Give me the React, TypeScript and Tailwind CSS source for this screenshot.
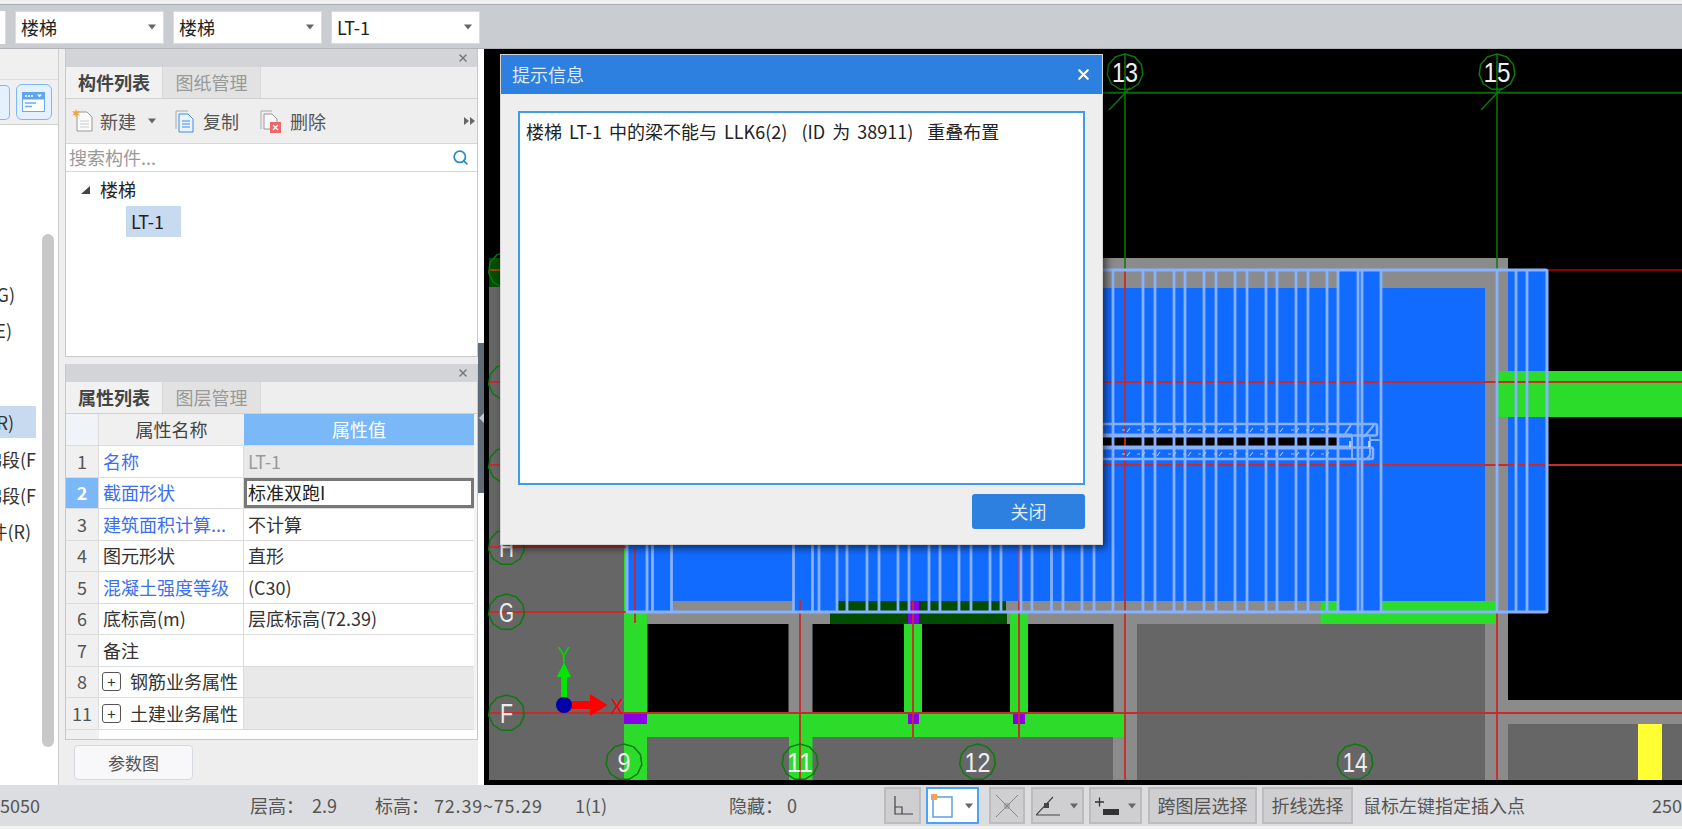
import React from "react";
import { Search, X } from "lucide-react";

const Caret = ({ className = "" }: { className?: string }) => (
  <svg width="10" height="6" viewBox="0 0 10 6" className={className}><path d="M1 0.5h8L5 5.5z" fill="#666" /></svg>
);

const Combo = ({ text, w = 149 }: { text: string; w?: number }) => (
  <div style={{ width: w }} className="h-[33px] shrink-0 bg-white border border-[#dcdcdc] flex items-center justify-between pl-[5px] pr-[6px] text-[18px] text-[#222]">
    <span>{text}</span>
    <Caret />
  </div>
);

const Tabs = ({ a, b }: { a: string; b: string }) => (
  <>
    <div className="h-[18px] bg-[#d2d4d8] flex items-center justify-end pr-[8px] shrink-0">
      <X size={12} strokeWidth={3} className="text-[#777]" />
    </div>
    <div className="h-[32px] flex bg-[#eeeeee] border-b border-[#d0d0d0] shrink-0">
      <div className="w-[97px] flex items-center justify-center font-bold text-[18px] text-[#444] bg-[#f1f1f1] border-r border-[#d8d8d8]">{a}</div>
      <div className="w-[98px] flex items-center justify-center text-[18px] text-[#999] bg-[#e2e2e2] border-r border-[#d8d8d8]">{b}</div>
    </div>
  </>
);

type Row = { n: string; name: string; val: string; blue?: boolean; plus?: boolean; grayVal?: boolean; sel?: boolean };
const rows: Row[] = [
  { n: "1", name: "名称", val: "LT-1", blue: true, grayVal: true },
  { n: "2", name: "截面形状", val: "标准双跑I", blue: true, sel: true },
  { n: "3", name: "建筑面积计算...", val: "不计算", blue: true },
  { n: "4", name: "图元形状", val: "直形" },
  { n: "5", name: "混凝土强度等级", val: "(C30)", blue: true },
  { n: "6", name: "底标高(m)", val: "层底标高(72.39)" },
  { n: "7", name: "备注", val: "" },
  { n: "8", name: "钢筋业务属性", val: "", plus: true, grayVal: true },
  { n: "11", name: "土建业务属性", val: "", plus: true, grayVal: true },
];

const PropRow = ({ r }: { r: Row }) => (
  <div className="flex h-[31.5px] border-b border-[#dcdcdc] text-[18px]">
    <div className={`w-[33px] shrink-0 flex items-center justify-center border-r border-[#dcdcdc] ${r.sel ? "bg-[#7ab8f8] text-white font-bold" : "bg-[#f0f0f0] text-[#555]"}`}>{r.n}</div>
    <div className={`w-[145px] shrink-0 flex items-center pl-[4px] whitespace-nowrap overflow-hidden border-r border-[#dcdcdc] bg-white ${r.blue ? "text-[#3b6ff0]" : "text-[#333]"}`}>
      {r.plus && (
        <span className="w-[19px] h-[19px] mr-[9px] ml-[-1px] border border-[#555] rounded-[3px] flex items-center justify-center text-[15px] leading-none text-[#333] shrink-0">+</span>
      )}
      {r.name}
    </div>
    <div className={`flex-1 flex items-center ${r.sel ? "border-[3px] border-[#777] bg-white text-[#222] pl-[1px]" : r.grayVal ? "bg-[#e9e9e9] text-[#999] pl-[4px]" : "bg-white text-[#333] pl-[4px]"}`}>{r.val}</div>
  </div>
);

const SideItem = ({ text, hi, w = 36, tw, mt = 0 }: { text: string; hi?: boolean; w?: number; tw?: number; mt?: number }) => (
  <div style={{ width: w, marginTop: mt }} className={`h-[32px] flex items-center ${hi ? "bg-[#c8daf0]" : ""}`}>
    <div style={{ width: tw ?? w }} className="flex justify-end overflow-hidden whitespace-nowrap text-[18px] text-[#333]">{text}</div>
  </div>
);

const Sidebar = () => (
  <div className="w-[59px] shrink-0 relative bg-white border-r border-[#cfcfcf] flex flex-col">
    <div className="h-[31px] bg-[#f0f0f0] border-b border-[#dedede]" />
    <div className="h-[45px] bg-[#f0f0f0] border-b border-[#cfcfcf] flex items-center gap-[6px] pr-[6px] justify-end">
      <div className="w-[10px] h-[35px] rounded-r-[5px] border border-l-0 border-[#7ab8f8] bg-[#e6f1ff]" />
      <div className="w-[37px] h-[36px] rounded-[6px] border border-[#7ab8f8] bg-[#e6f1ff] flex items-center justify-center">
        <svg width="23" height="20" viewBox="0 0 23 20">
          <rect x="0.5" y="0.5" width="22" height="19" fill="#fff" stroke="#6aa9ee" />
          <rect x="0.5" y="0.5" width="22" height="7" fill="#5ea4ee" />
          <path d="M4 3v2M7 3v2M10 3v2" stroke="#fff" strokeWidth="1.6" />
          <path d="M15 2.5h5l-2.5 3z" fill="#fff" />
          <path d="M3 11h11M3 14.5h7" stroke="#6aa9ee" strokeWidth="1.5" />
        </svg>
      </div>
    </div>
    <div className="flex flex-col">
      <div className="h-[153px]" />
      <SideItem text="(G)" w={15} />
      <SideItem text="(E)" w={12} mt={4} />
      <SideItem text="(R)" hi tw={14} mt={60} />
      <SideItem text="梯段(F" mt={5} />
      <SideItem text="梯段(F" mt={4} />
      <SideItem text="件(R)" w={31} mt={4} />
    </div>
    <div className="absolute left-[42px] top-[185px] w-[12px] h-[513px] rounded-full bg-[#c8c8c8]" />
  </div>
);

const Panels = () => (
  <div className="w-[413px] shrink-0 flex flex-col bg-[#eeeeee] text-[#333]">
    <div className="h-[308px] flex flex-col border border-t-0 border-[#c8c8c8] bg-white shrink-0">
      <Tabs a="构件列表" b="图纸管理" />
      <div className="h-[45px] bg-[#eeeeee] border-b border-[#d6d6d6] flex items-center pl-[6px] text-[18px] text-[#555] shrink-0">
        <svg width="22" height="24" viewBox="0 0 22 24" className="mr-[6px]">
          <path d="M5 3h10l5 5v14H5z" fill="#fafafa" stroke="#999" />
          <path d="M8 12h9M8 15h9M8 18h9" stroke="#ccc" />
          <path d="M4 0l1 2.5L8 2 6 4.500l2 2-3-.5-1 2.500-1-2.500-3 .5 2-2L0 2l3 .5z" fill="#f6a53c" />
        </svg>
        <span>新建</span>
        <Caret className="ml-[11px]" />
        <svg width="19" height="23" viewBox="0 0 19 23" className="ml-[18px]">
          <path d="M1 19V1h12" fill="none" stroke="#aaa" />
          <path d="M4 4h9l5 5v13H4z" fill="#eaf3fd" stroke="#3f8ee0" />
          <path d="M7 11h8M7 14h8M7 17h8" stroke="#3f8ee0" />
        </svg>
        <span className="ml-[9px]">复制</span>
        <svg width="22" height="23" viewBox="0 0 22 23" className="ml-[21px]">
          <path d="M1 19V1h11" fill="none" stroke="#aaa" />
          <path d="M4 4h8l5 5v10H4z" fill="#f7f7f7" stroke="#999" />
          <rect x="10" y="12" width="11" height="11" fill="#e66" />
          <path d="M13 15l5 5M18 15l-5 5" stroke="#fff" strokeWidth="1.3" />
        </svg>
        <span className="ml-[8px]">删除</span>
        <svg width="11" height="8" viewBox="0 0 11 8" className="ml-auto mr-[2px]"><path d="M0 0l5 4-5 4zM6 0l5 4-5 4z" fill="#666" /></svg>
      </div>
      <div className="h-[28px] bg-white border-b border-[#d6d6d6] flex items-center justify-between pl-[3px] pr-[8px] text-[18px] text-[#999] shrink-0">
        <span>搜索构件...</span>
        <Search size={17} strokeWidth={2.5} className="text-[#2b8cc4]" />
      </div>
      <div className="flex-1 bg-white pl-[15px] pt-[2px] text-[18px] text-[#222]">
        <div className="h-[31px] flex items-center">
          <svg width="9" height="8" viewBox="0 0 9 8"><path d="M9 0v8H0z" fill="#444" /></svg>
          <span className="ml-[10px]">楼梯</span>
        </div>
        <div className="ml-[45px] mt-[1px] w-[55px] h-[31px] bg-[#c8daf0] flex items-center pl-[5px]">LT-1</div>
      </div>
    </div>
    <div className="h-[7px] shrink-0" />
    <div className="h-[376px] flex flex-col border border-t-0 border-[#c8c8c8] shrink-0 bg-[#f3f3f3]">
      <Tabs a="属性列表" b="图层管理" />
      <div className="flex h-[32px] border-b border-[#dcdcdc] text-[18px] shrink-0 mr-[3px]">
        <div className="w-[33px] bg-[#f0f3f8] border-r border-[#dcdcdc]" />
        <div className="w-[145px] bg-[#f0f0f0] flex items-center justify-center text-[#444]">属性名称</div>
        <div className="flex-1 bg-[#7ab8f8] flex items-center justify-center text-white">属性值</div>
      </div>
      <div className="flex flex-col mr-[3px]">
        {rows.map((r) => <PropRow key={r.n} r={r} />)}
      </div>
      <div className="flex-1 flex bg-white"><div className="w-[33px] bg-[#f0f0f0]" /></div>
    </div>
    <div className="pl-[9px] pt-[5px]">
      <div className="w-[119px] h-[35px] rounded-[4px] border border-[#d4d9e2] bg-[#f8f8fa] flex items-center justify-center text-[17px] text-[#555]">参数图</div>
    </div>
  </div>
);

const Bubble = ({ x, y, t, w }: { x: number; y: number; t: string; w: number }) => {
  const pts = Array.from({ length: 11 }, (_, i) => {
    const a = (i / 11) * Math.PI * 2 - Math.PI / 2;
    return `${(x + 18 * Math.cos(a)).toFixed(1)},${(y + 18 * Math.sin(a)).toFixed(1)}`;
  }).join(" ");
  return (
    <g>
      <polygon points={pts} fill="none" stroke="#0b7a0b" strokeWidth="1.5" />
      <text x={x} y={y + 10} textAnchor="middle" fontFamily="'Liberation Sans',sans-serif" fontSize="27" fill="#eee" textLength={w} lengthAdjust="spacingAndGlyphs">{t}</text>
    </g>
  );
};

const GRAY = "#8b8b8b", DARK = "#666666", BLUE = "#126bff", GREEN = "#2bdc2b", LINE = "#86b2ff", DG = "#004d00", PUR = "#8a00e6", RED = "#c92a2a";

const lines = [647, 652.5, 671.5, 793.5, 812.5, 819, 837, 847, 867, 879, 898, 909, 929, 940, 959, 971, 990, 1001, 1021, 1032, 1051.5, 1063, 1082, 1094, 1113, 1143, 1155, 1174, 1185, 1204, 1216, 1235, 1247, 1266, 1277, 1296, 1308, 1327, 1338, 1358, 1362, 1381, 1497, 1516, 1527];
const ticks = [1122, 1137, 1152, 1168, 1183, 1198, 1214, 1229, 1245, 1260, 1275, 1291, 1306, 1321];

const R = (x: number, y: number, x2: number, y2: number, fill: string) => <rect x={x} y={y} width={x2 - x} height={y2 - y} fill={fill} />;
const H = (y: number, x: number, x2: number, c = RED, w = 1.8) => <line x1={x} x2={x2} y1={y} y2={y} stroke={c} strokeWidth={w} />;
const V = (x: number, y: number, y2: number, c = RED, w = 1.8) => <line x1={x} x2={x} y1={y} y2={y2} stroke={c} strokeWidth={w} />;

const Drawing = () => (
  <svg viewBox="484 49 1198 736" className="block w-full h-full">
    {R(484, 49, 1682, 785, "#000")}
    {R(489, 258, 624, 287, DG)}
    {R(489, 287, 624, 780, DARK)}
    {R(624, 258, 1508, 780, GRAY)}
    {R(627, 288, 1485, 601, BLUE)}
    {R(1508, 700, 1682, 724, GRAY)}
    {R(1508, 724, 1682, 780, DARK)}
    {R(1638, 724, 1662, 780, "#ffff33")}
    {R(1137, 624, 1485, 780, DARK)}
    {R(647, 737, 789, 780, DARK)}
    {R(812, 737, 1113, 780, DARK)}
    {R(647.5, 624, 788.5, 712, "#000")}
    {R(812.5, 624, 904, 712, "#000")}
    {R(922, 624, 1010, 712, "#000")}
    {R(1028, 624, 1113.5, 712, "#000")}
    {R(624, 550, 627, 780, GREEN)}
    {R(624, 613, 647, 780, GREEN)}
    {R(624, 713, 1125, 737, GREEN)}
    {R(789, 737, 812.5, 780, GREEN)}
    {R(904, 624, 922, 713, GREEN)}
    {R(1010, 612, 1028, 713, GREEN)}
    {R(1320.5, 601, 1496, 624, GREEN)}
    {R(838, 601, 1006, 612, DG)}
    {R(830, 612, 1007, 624, DG)}
    {R(908, 601, 919, 624, PUR)}
    {R(624, 713, 647, 724, PUR)}
    {R(908, 713, 919, 724, PUR)}
    {R(1013, 713, 1025, 724, PUR)}
    {R(1508, 270, 1547, 371, BLUE)}
    {R(1508, 417, 1547, 612, BLUE)}
    {R(1498, 371, 1682, 417, GREEN)}
    {R(1338, 270, 1381, 288, BLUE)}
    {R(1338, 601, 1381, 612, BLUE)}
    {R(627, 601, 672, 612, BLUE)}
    {R(793, 601, 837, 612, BLUE)}
    {R(1102, 437, 1337, 446, "#000")}

    {H(270, 1547, 1682, "#8a0000", 2)}
    {H(382, 1102, 1682)}
    {H(465, 1102, 1682)}
    {H(713, 490, 1682)}
    {H(612, 490, 627)}
    {H(547, 490, 627)}
    {H(382, 490, 500)}
    {H(465, 490, 500)}
    {H(270, 490, 500, "#a33a00", 2)}

    {V(635, 548, 623)}
    {V(800, 600, 780)}
    {V(913, 600, 737)}
    {V(1019, 545, 737, "#b04a7a", 1.4)}
    {V(1019, 601, 737)}
    {V(1125, 270, 780)}
    {V(1497, 612, 780)}

    {H(92.7, 1102, 1682, "#0a6a0a", 2)}
    {V(1125, 54, 270, "#0a7a0a", 1.5)}
    {V(1497, 54, 270, "#0a7a0a", 1.5)}
    <line x1="1109" y1="110" x2="1130" y2="88" stroke="#0a7a0a" strokeWidth="1.5" />
    <line x1="1481" y1="110" x2="1502" y2="88" stroke="#0a7a0a" strokeWidth="1.5" />

    {lines.map((x) => <React.Fragment key={x}>{V(x, 270, 612, LINE, 2.8)}</React.Fragment>)}
    <rect x="627" y="270" width="920" height="342" rx="1" fill="none" stroke={LINE} strokeWidth="3" />

    <rect x="1102" y="424" width="275" height="11.500" rx="2" fill="none" stroke={LINE} strokeWidth="2.6" />
    {H(435.5, 1102, 1352, LINE, 4)}
    <rect x="1102" y="447.500" width="271" height="11.500" rx="2" fill="none" stroke={LINE} strokeWidth="2.6" />
    {H(447.5, 1102, 1352, LINE, 4)}
    <path d="M1343 437l8-12M1364 437l10-12M1369 440h11M1370 437v16a6 6 0 0 1-8 6M1352 437v22" fill="none" stroke={LINE} strokeWidth="2" />
    <path d="M1350 441v6M1369 441v6" stroke="#dbe7ff" strokeWidth="1.5" />
    {ticks.map((x) => (
      <path key={x} d={`M${x} 430h3M${x + 5} 432l3-4M${x} 454h3M${x + 5} 456l3-4`} stroke="#a9c6ff" strokeWidth="1.1" fill="none" />
    ))}

    <Bubble x={1125} y={72} t="13" w={26} />
    <Bubble x={1497} y={72} t="15" w={27} />
    <Bubble x={624} y={762} t="9" w={13} />
    <Bubble x={800} y={762} t="11" w={26} />
    <Bubble x={977.5} y={762} t="12" w={26} />
    <Bubble x={1355} y={762} t="14" w={25} />
    <Bubble x={506.5} y={270} t="J" w={12} />
    <Bubble x={506.5} y={382} t="K" w={15} />
    <Bubble x={506.5} y={465} t="J" w={12} />
    <Bubble x={506.5} y={547} t="H" w={15} />
    <Bubble x={506.5} y={612} t="G" w={15} />
    <Bubble x={506.5} y={713} t="F" w={13} />

    <path d="M561 705v-28h-4l7-15 7 15h-4v28z" fill="#00e600" />
    <path d="M564 701h26v-7l17.500 11-17.500 11v-7h-26z" fill="#ff0000" />
    <circle cx="564" cy="705" r="8" fill="#0000a8" />
    <text x="564" y="662" textAnchor="middle" fontFamily="'Liberation Sans',sans-serif" fontSize="22" fill="#00d000" textLength="13" lengthAdjust="spacingAndGlyphs">Y</text>
    <text x="617" y="714" textAnchor="middle" fontFamily="'Liberation Sans',sans-serif" fontSize="22" fill="#ff0000" textLength="13" lengthAdjust="spacingAndGlyphs">X</text>
  </svg>
);

const Dialog = () => (
  <div className="absolute left-[16px] top-[5px] w-[603px] h-[491px] bg-[#eeeeee] border border-[#d4d4d4] shadow-[3px_3px_8px_rgba(0,0,0,0.6)] flex flex-col">
    <div className="h-[39px] bg-[#2d7fe0] flex items-center justify-between pl-[11px] pr-[10px] text-[18px] text-[#dfeafa] shrink-0">
      <span>提示信息</span>
      <X size={17} strokeWidth={3} className="text-white" />
    </div>
    <div className="mx-[17px] mt-[17px] h-[374px] bg-white border-2 border-[#3d9be9] px-[6px] pt-[5px] text-[18px] leading-[26px] text-[#222] whitespace-pre [word-spacing:3px]">
      楼梯 LT-1 中的梁不能与 LLK6(2)  (ID 为 38911)  重叠布置
    </div>
    <div className="flex justify-end mr-[17px] mt-[9px]">
      <div className="w-[113px] h-[35px] rounded-[3px] bg-[#2d7fe0] text-[#dfeafa] text-[18px] flex items-center justify-center">关闭</div>
    </div>
  </div>
);

const SBtn = ({ w, children, cls = "" }: { w: number; children: React.ReactNode; cls?: string }) => (
  <div style={{ width: w }} className={`h-[37px] shrink-0 flex items-center justify-center border-2 ${cls || "border-[#bcbcbc] bg-[#cfcfd1]"}`}>{children}</div>
);

const StatusBar = () => (
  <div className="h-[41px] bg-[#dcdde0] flex items-center text-[18px] text-[#555] shrink-0 whitespace-nowrap">
    <div className="w-[250px] shrink-0">5050</div>
    <div className="w-[125px] shrink-0">层高：&nbsp;&nbsp;2.9</div>
    <div className="w-[200px] shrink-0 flex">
      <span>标高：</span>
      <span className="ml-[5px] tracking-[0.8px]">72.39~75.29</span>
    </div>
    <div className="w-[154px] shrink-0">1(1)</div>
    <div className="w-[155px] shrink-0">隐藏：&nbsp;0</div>
    <SBtn w={37}>
      <svg width="22" height="22" viewBox="0 0 22 22"><path d="M3 1v18h18M3 12h7v7" fill="none" stroke="#444" strokeWidth="1.2" /></svg>
    </SBtn>
    <div className="w-[5px] shrink-0" />
    <SBtn w={53} cls="border-[#4aa3f5] bg-white">
      <div className="flex items-center gap-[11px]">
        <svg width="22" height="24" viewBox="0 0 22 24"><rect x="2" y="3" width="19" height="20" fill="none" stroke="#5c9fe6" strokeWidth="1.5" /><rect x="0" y="0" width="6" height="6" fill="#f5a05a" /></svg>
        <Caret />
      </div>
    </SBtn>
    <div className="w-[10px] shrink-0" />
    <SBtn w={36}>
      <svg width="26" height="26" viewBox="0 0 26 26"><path d="M2 2l22 22M24 2L2 24" stroke="#888" strokeWidth="1" /><rect x="11" y="11" width="4" height="4" fill="none" stroke="#888" /></svg>
    </SBtn>
    <div className="w-[6px] shrink-0" />
    <SBtn w={53}>
      <div className="flex items-center gap-[9px]">
        <svg width="24" height="20" viewBox="0 0 24 20"><path d="M0 19L17 1M0 19h24" stroke="#444" strokeWidth="1.2" fill="none" /><rect x="8" y="7" width="5" height="5" fill="#444" /></svg>
        <Caret />
      </div>
    </SBtn>
    <div className="w-[5px] shrink-0" />
    <SBtn w={53}>
      <div className="flex items-center gap-[7px]">
        <svg width="26" height="20" viewBox="0 0 26 20"><path d="M1 6h9M5.500 1.500v9" stroke="#333" strokeWidth="1.3" /><rect x="9" y="13" width="16" height="6" fill="#333" /></svg>
        <Caret />
      </div>
    </SBtn>
    <div className="w-[6px] shrink-0" />
    <SBtn w={109}>跨图层选择</SBtn>
    <div className="w-[5px] shrink-0" />
    <SBtn w={91}>折线选择</SBtn>
    <div className="ml-[10px] w-[289px] shrink-0">鼠标左键指定插入点</div>
    <div>250</div>
  </div>
);

export default function App() {
  return (
    <div className="w-[1682px] h-[829px] overflow-hidden bg-[#f0f0f0] flex flex-col font-['Noto_Sans_CJK_SC','Liberation_Sans',sans-serif]">
      <div className="h-[5px] bg-[#f0f0f0] border-b border-[#a8abb0] shrink-0" />
      <div className="h-[44px] bg-[#c9ccd1] flex items-center gap-[9px] shrink-0 border-b border-[#b0b3b8] pt-[1px]">
        <div className="w-[6px] h-[33px] bg-white border-r border-[#dcdcdc] shrink-0" />
        <Combo text="楼梯" />
        <Combo text="楼梯" />
        <Combo text="LT-1" />
      </div>
      <div className="flex h-[736px] shrink-0">
        <Sidebar />
        <div className="w-[6px] shrink-0 bg-[#eeeeee]" />
        <Panels />
        <div className="w-[6px] shrink-0 bg-white flex flex-col">
          <div className="h-[294px]" />
          <div className="h-[150px] bg-[#5f6b76] flex items-center justify-center">
            <svg width="5" height="10" viewBox="0 0 5 10"><path d="M5 0v10L0 5z" fill="#c4cad0" /></svg>
          </div>
        </div>
        <div className="flex-1 relative bg-black">
          <Drawing />
          <Dialog />
        </div>
      </div>
      <StatusBar />
      <div className="flex-1 bg-[#f4f4f4]" />
    </div>
  );
}
